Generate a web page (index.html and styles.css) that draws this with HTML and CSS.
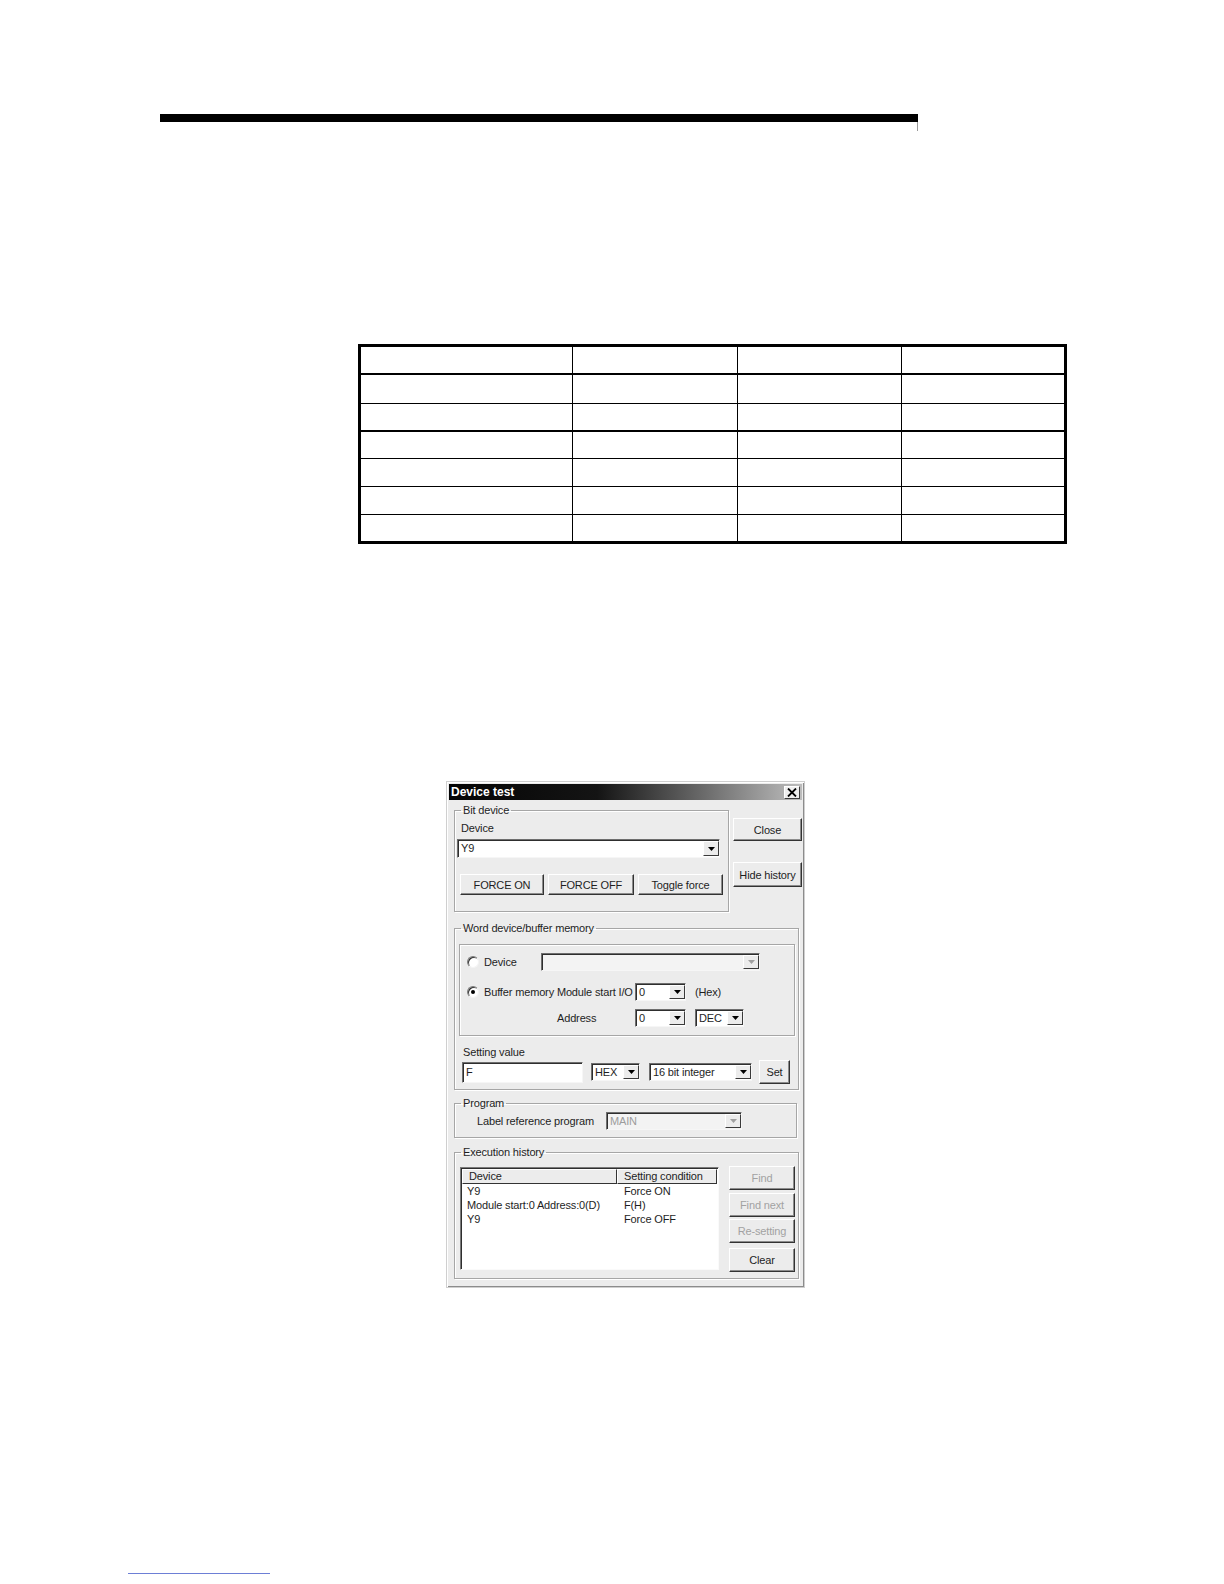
FILE: index.html
```html
<!DOCTYPE html>
<html lang="en">
<head>
<meta charset="utf-8">
<title>Device test</title>
<link rel="stylesheet" href="styles.css">
</head>
<body>
<div class="rule"></div>
<div class="tick"></div>

<div class="grid">
  <div class="c h"></div><div class="c h"></div><div class="c h"></div><div class="c h"></div>
  <div class="c r1c"></div><div class="c r1c"></div><div class="c r1c"></div><div class="c r1c"></div>
  <div class="c thick"></div><div class="c thick"></div><div class="c thick"></div><div class="c thick"></div>
  <div class="c r3c"></div><div class="c r3c"></div><div class="c r3c"></div><div class="c r3c"></div>
  <div class="c"></div><div class="c"></div><div class="c"></div><div class="c"></div>
  <div class="c"></div><div class="c"></div><div class="c"></div><div class="c"></div>
  <div class="c last"></div><div class="c last"></div><div class="c last"></div><div class="c last"></div>
</div>

<div class="dialog">
  <div class="titlebar">
    <span class="title">Device test</span>
    <span class="xbtn"><svg width="10" height="9" viewBox="0 0 10 9"><path d="M1 0.5 L9 8.5 M9 0.5 L1 8.5" stroke="#000" stroke-width="1.8" fill="none"/></svg></span>
  </div>
  <div class="dbody">
    <div class="row-top">
      <fieldset class="group g-bit">
        <legend>Bit device</legend>
        <div class="lbl-dev">Device</div>
        <div class="combo c-dev"><span class="val">Y9</span><span class="drop"><svg width="7" height="4" viewBox="0 0 7 4"><path d="M0 0 H7 L3.5 4 Z" fill="#000"/></svg></span></div>
        <div class="btnrow">
          <button class="btn b-on">FORCE ON</button>
          <button class="btn b-off">FORCE OFF</button>
          <button class="btn b-tog">Toggle force</button>
        </div>
      </fieldset>
      <div class="side">
        <button class="btn b-close">Close</button>
        <button class="btn b-hide">Hide history</button>
      </div>
    </div>

    <fieldset class="group g-word">
      <legend>Word device/buffer memory</legend>
      <div class="inner">
        <div class="wrow r1">
          <span class="rlabel rl1"><span class="radio"></span><span class="rtext">Device</span></span>
          <div class="combo c-wdev disabled"><span class="val"></span><span class="drop"><svg width="7" height="4" viewBox="0 0 7 4"><path d="M0 0 H7 L3.5 4 Z" fill="#a0a0a0"/></svg></span></div>
        </div>
        <div class="wrow r2">
          <span class="rlabel rl2"><span class="radio"><span class="dot"></span></span><span class="rtext">Buffer memory Module start I/O</span></span>
          <div class="combo c-small"><span class="val">0</span><span class="drop"><svg width="7" height="4" viewBox="0 0 7 4"><path d="M0 0 H7 L3.5 4 Z" fill="#000"/></svg></span></div>
          <span class="hex">(Hex)</span>
        </div>
        <div class="wrow r3">
          <span class="rlabel rl3">Address</span>
          <div class="combo c-small"><span class="val">0</span><span class="drop"><svg width="7" height="4" viewBox="0 0 7 4"><path d="M0 0 H7 L3.5 4 Z" fill="#000"/></svg></span></div>
          <div class="combo c-dec"><span class="val">DEC</span><span class="drop"><svg width="7" height="4" viewBox="0 0 7 4"><path d="M0 0 H7 L3.5 4 Z" fill="#000"/></svg></span></div>
        </div>
      </div>
      <div class="lbl-set">Setting value</div>
      <div class="setrow">
        <div class="input">F</div>
        <div class="combo c-hex"><span class="val">HEX</span><span class="drop"><svg width="7" height="4" viewBox="0 0 7 4"><path d="M0 0 H7 L3.5 4 Z" fill="#000"/></svg></span></div>
        <div class="combo c-int"><span class="val">16 bit integer</span><span class="drop"><svg width="7" height="4" viewBox="0 0 7 4"><path d="M0 0 H7 L3.5 4 Z" fill="#000"/></svg></span></div>
        <button class="btn b-set">Set</button>
      </div>
    </fieldset>

    <fieldset class="group g-prog">
      <legend>Program</legend>
      <div class="progrow">
        <span class="plabel">Label reference program</span>
        <div class="combo c-main disabled"><span class="val">MAIN</span><span class="drop"><svg width="7" height="4" viewBox="0 0 7 4"><path d="M0 0 H7 L3.5 4 Z" fill="#a0a0a0"/></svg></span></div>
      </div>
    </fieldset>

    <fieldset class="group g-exec">
      <legend>Execution history</legend>
      <div class="execrow">
        <div class="list">
          <div class="lhead"><span class="hc hc1">Device</span><span class="hc hc2">Setting condition</span></div>
          <div class="lrow"><span class="lc1">Y9</span><span class="lc2">Force ON</span></div>
          <div class="lrow"><span class="lc1">Module start:0 Address:0(D)</span><span class="lc2">F(H)</span></div>
          <div class="lrow"><span class="lc1">Y9</span><span class="lc2">Force OFF</span></div>
        </div>
        <div class="ebtns">
          <button class="btn eb dis b-find">Find</button>
          <button class="btn eb dis b-next">Find next</button>
          <button class="btn eb dis b-reset">Re-setting</button>
          <button class="btn eb b-clear">Clear</button>
        </div>
      </div>
    </fieldset>
  </div>
</div>

<div class="footline"></div>
</body>
</html>
```

FILE: styles.css
```css
* { box-sizing: border-box; }

body {
  margin: 0;
  background: #fff;
  font-family: "Liberation Sans", Arial, sans-serif;
}

.rule {
  margin: 114px 0 0 160px;
  width: 758px;
  height: 8px;
  background: #000;
}

.tick {
  margin-left: 917px;
  width: 1px;
  height: 9px;
  background: #9a9a9a;
}

/* empty table */
.grid {
  margin: 213px 0 0 358px;
  width: 709px;
  display: grid;
  grid-template-columns: 212px 165px 164px 162px;
  border: 3px solid #000;
}
.c {
  height: 28px;
  border-right: 1px solid #000;
  border-bottom: 1px solid #000;
}
.c:nth-child(4n) { border-right: 0; }
.c.h { height: 28px; border-bottom-width: 2px; }
.c.r1c { height: 29px; }
.c.thick { height: 28px; border-bottom-width: 2px; }
.c.r3c { height: 27px; }
.c.last { height: 26px; border-bottom: 0; }

/* dialog */
.dialog {
  margin: 237px 0 0 446px;
  width: 359px;
  height: 507px;
  background: #ececec;
  border: 1px solid #cfcfcf;
  padding: 2px;
  box-shadow: inset 1px 1px #ffffff, inset -1px -1px #8c8c8c;
  font-size: 11px;
  color: #1e1e1e;
  letter-spacing: -0.15px;
}

.titlebar {
  height: 16px;
  display: flex;
  align-items: center;
  justify-content: space-between;
  padding: 0 2px 0 2px;
  background: linear-gradient(to right, #050505 0%, #141414 42%, #6a6a6a 72%, #bdbdbd 100%);
}
.title {
  color: #fff;
  font-weight: bold;
  font-size: 12px;
  letter-spacing: 0;
  line-height: 16px;
}
.xbtn {
  width: 16px;
  height: 13px;
  background: #efefef;
  border: 1px solid;
  border-color: #fff #3c3c3c #3c3c3c #fff;
  display: flex;
  align-items: center;
  justify-content: center;
}

.dbody { padding-left: 5px; }

.row-top {
  display: flex;
  margin-top: 4px;
}

fieldset.group {
  margin: 0;
  padding: 0;
  min-width: 0;
  border: 1px solid #a6a6a6;
  box-shadow: 1px 1px 0 #fff, inset 1px 1px 0 #fff;
}
fieldset.group legend {
  padding: 0 2px;
  margin-left: 6px;
  height: 13px;
  line-height: 13px;
  font-size: 11px;
}

.g-bit {
  width: 275px;
  padding: 5px 0 16px 0 !important;
}
.lbl-dev {
  padding-left: 6px;
  line-height: 13px;
}

.combo {
  display: flex;
  height: 18px;
  background: #fff;
  border: 1px solid;
  border-color: #6e6e6e #f6f6f6 #f6f6f6 #6e6e6e;
  box-shadow: inset 1px 1px #2e2e2e;
}
.combo .val {
  flex: 1;
  padding: 0 0 0 3px;
  line-height: 16px;
  white-space: nowrap;
  overflow: hidden;
}
.drop {
  width: 16px;
  margin: 1px 0 1px 0;
  background: #ececec;
  border: 1px solid;
  border-color: #fff #3a3a3a #3a3a3a #fff;
  display: flex;
  align-items: center;
  justify-content: center;
}
.combo.disabled { background: #f3f3f3; }
.combo.disabled .val { color: #9c9c9c; }

.c-dev {
  margin: 4px 0 0 2px;
  width: 263px;
  height: 19px;
}
.c-dev .val { line-height: 17px; }

.btn {
  font-family: inherit;
  font-size: 11px;
  letter-spacing: -0.15px;
  color: #1e1e1e;
  background: #ececec;
  border: 1px solid;
  border-color: #fff #333 #333 #fff;
  box-shadow: inset -1px -1px #8c8c8c;
  padding: 0;
  margin: 0;
  display: flex;
  align-items: center;
  justify-content: center;
}

.btnrow {
  display: flex;
  margin: 16px 0 0 5px;
}
.btnrow .btn { height: 21px; }
.b-on { width: 84px; }
.b-off { width: 86px; margin-left: 4px !important; }
.b-tog { width: 85px; margin-left: 4px !important; }

.side {
  display: flex;
  flex-direction: column;
  margin-left: 4px;
}
.b-close { width: 69px; height: 23px; margin-top: 14px !important; }
.b-hide { width: 69px; height: 25px; margin-top: 21px !important; }

/* word device group */
.g-word {
  width: 345px;
  margin-top: 10px !important;
  padding: 9px 0 5px 0 !important;
}
.inner {
  margin-left: 4px;
  width: 336px;
  border: 1px solid #a6a6a6;
  box-shadow: inset 1px 1px #fff, 1px 1px #fff;
  padding: 8px 0 8px 7px;
}
.wrow {
  display: flex;
  align-items: center;
  height: 18px;
}
.r2 { margin-top: 12px; }
.r3 { margin-top: 8px; }

.rlabel {
  display: flex;
  align-items: center;
  white-space: nowrap;
}
.rl1 { width: 74px; }
.rl2 { width: 168px; }
.rl3 { width: 168px; padding-left: 90px; }

.radio {
  width: 12px;
  height: 12px;
  border-radius: 50%;
  background: #fff;
  border: 1px solid;
  border-color: #7a7a7a #f4f4f4 #f4f4f4 #7a7a7a;
  box-shadow: inset 1px 1px #333;
  display: flex;
  align-items: center;
  justify-content: center;
}
.dot {
  width: 4px;
  height: 4px;
  border-radius: 50%;
  background: #000;
}
.rtext { margin-left: 5px; }

.c-wdev { width: 219px; }
.c-small { width: 51px; }
.c-dec { width: 49px; margin-left: 9px; }
.hex { margin-left: 9px; }

.lbl-set {
  margin: 10px 0 0 8px;
  line-height: 13px;
}
.setrow {
  display: flex;
  align-items: center;
  height: 24px;
  margin: 1px 0 0 7px;
}
.input {
  width: 121px;
  height: 21px;
  background: #fff;
  border: 1px solid;
  border-color: #6e6e6e #f6f6f6 #f6f6f6 #6e6e6e;
  box-shadow: inset 1px 1px #2e2e2e;
  padding-left: 3px;
  line-height: 19px;
}
.c-hex { width: 49px; margin-left: 8px; }
.c-int { width: 103px; margin-left: 9px; }
.b-set { width: 31px; height: 24px; margin-left: 7px !important; }

/* program group */
.g-prog {
  width: 343px;
  margin-top: 7px !important;
  padding: 2px 0 7px 0 !important;
}
.progrow {
  display: flex;
  align-items: center;
  height: 18px;
}
.plabel {
  width: 151px;
  padding-left: 22px;
  white-space: nowrap;
}
.c-main { width: 136px; }

/* execution history */
.g-exec {
  width: 345px;
  margin-top: 8px !important;
  padding: 7px 0 6px 0 !important;
}
.execrow {
  display: flex;
  align-items: flex-start;
}
.list {
  margin: 1px 0 0 5px;
  width: 259px;
  height: 103px;
  background: #fff;
  border: 1px solid;
  border-color: #7a7a7a #fafafa #fafafa #7a7a7a;
  box-shadow: inset 1px 1px #2e2e2e;
  padding: 1px 0 0 1px;
}
.lhead {
  display: flex;
  height: 15px;
}
.hc {
  height: 15px;
  line-height: 13px;
  background: #ececec;
  border: 1px solid;
  border-color: #fff #333 #333 #fff;
  padding-left: 6px;
  white-space: nowrap;
}
.hc1 { width: 155px; }
.hc2 { width: 100px; }
.lrow {
  display: flex;
  line-height: 14px;
  height: 14px;
  white-space: nowrap;
}
.lc1 { width: 155px; padding-left: 5px; }
.lc2 { padding-left: 7px; }

.ebtns {
  display: flex;
  flex-direction: column;
  margin-left: 10px;
}
.eb { width: 66px; height: 24px; }
.b-next { margin-top: 3px !important; }
.b-reset { margin-top: 2px !important; }
.b-clear { margin-top: 5px !important; }
.btn.dis { color: #a2a2a2; }

.footline {
  margin: 285px 0 0 128px;
  width: 142px;
  height: 1px;
  background: #6d7fd6;
}
```
